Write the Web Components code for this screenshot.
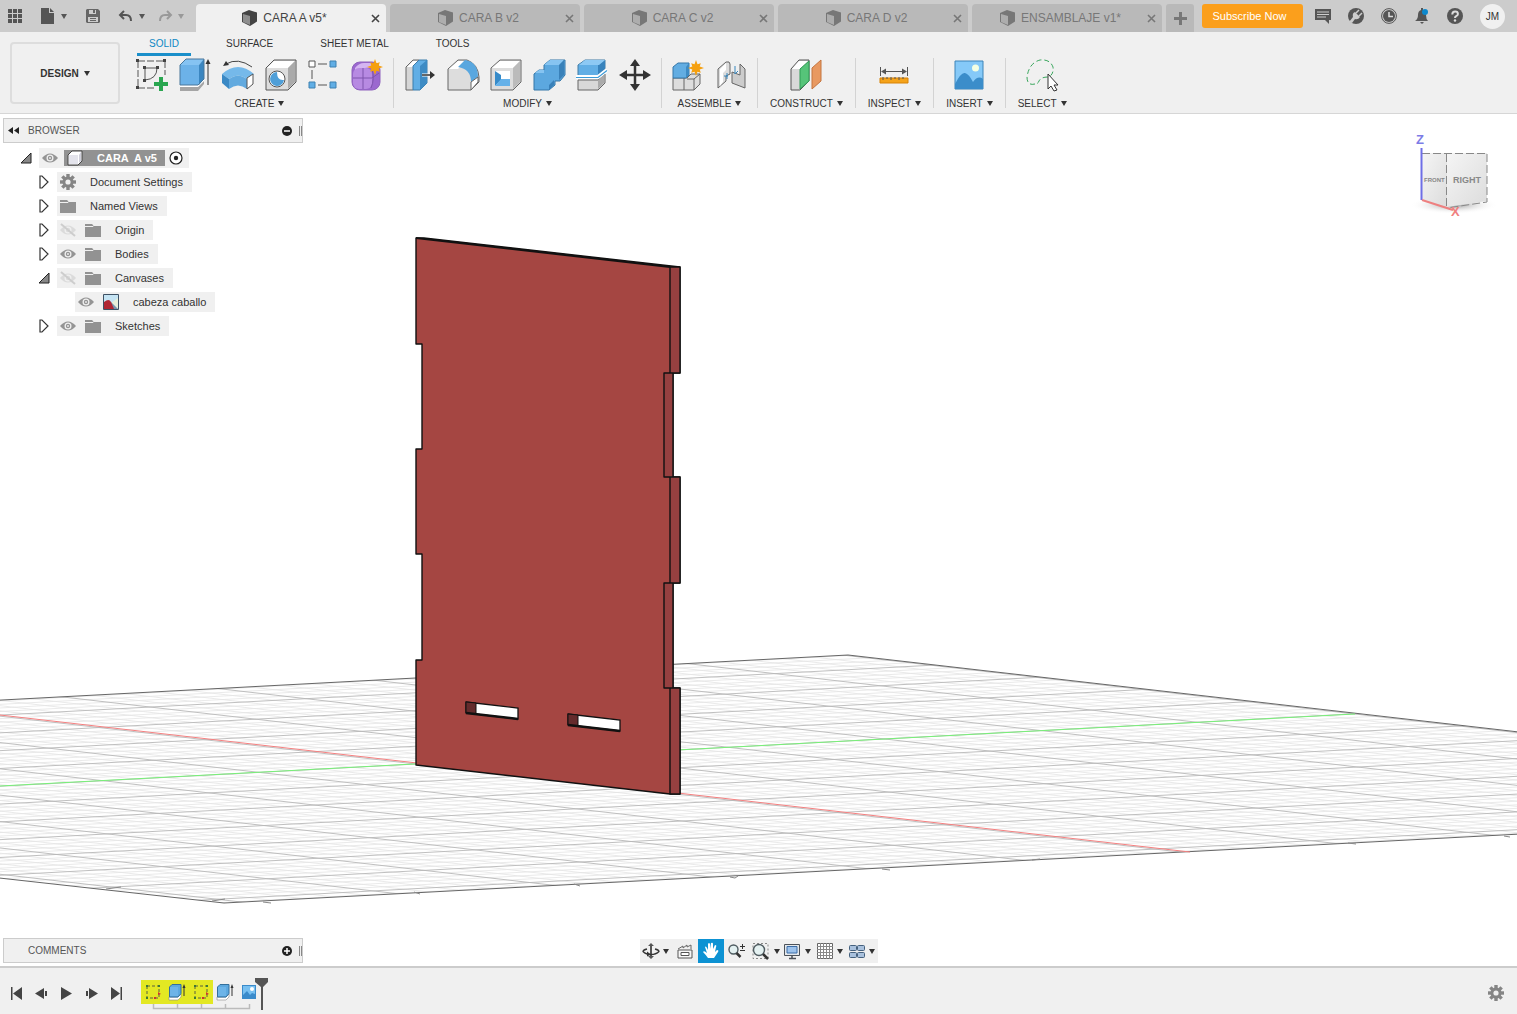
<!DOCTYPE html>
<html lang="en">
<head>
<meta charset="utf-8">
<title>CARA A v5*</title>
<style>
  body {
    margin: 0;
    height: 100vh;
    display: flex;
    flex-direction: column;
    overflow: hidden;
    font-family: "Liberation Sans", Arial, sans-serif;
    font-size: 11px;
    color: #333;
    background: #fff;
  }
</style>
</head>
<body>
<cad-topbar>
  <cad-tab active>CARA A v5*</cad-tab>
  <cad-tab>CARA B v2</cad-tab>
  <cad-tab>CARA C v2</cad-tab>
  <cad-tab>CARA D v2</cad-tab>
  <cad-tab>ENSAMBLAJE v1*</cad-tab>
</cad-topbar>
<cad-ribbon>
  <ribbon-group label="CREATE" icons="sketch extrude revolve hole pattern form"></ribbon-group>
  <ribbon-group label="MODIFY" icons="press fillet shell combine split move"></ribbon-group>
  <ribbon-group label="ASSEMBLE" icons="component joint"></ribbon-group>
  <ribbon-group label="CONSTRUCT" icons="plane"></ribbon-group>
  <ribbon-group label="INSPECT" icons="measure"></ribbon-group>
  <ribbon-group label="INSERT" icons="picture"></ribbon-group>
  <ribbon-group label="SELECT" icons="select"></ribbon-group>
</cad-ribbon>
<cad-viewport>
  <cad-scene slot="scene"></cad-scene>
  <cad-panel slot="browser" label="BROWSER" collapse sign="minus">
    <tree-row level="0" open eye="on" icon="cube" root>CARA  A v5</tree-row>
    <tree-row level="1" icon="gear">Document Settings</tree-row>
    <tree-row level="1" icon="folder">Named Views</tree-row>
    <tree-row level="1" eye="off" icon="folder">Origin</tree-row>
    <tree-row level="1" eye="on" icon="folder">Bodies</tree-row>
    <tree-row level="1" open eye="off" icon="folder">Canvases</tree-row>
    <tree-row level="2" leaf eye="on" icon="canvas">cabeza caballo</tree-row>
    <tree-row level="1" eye="on" icon="folder">Sketches</tree-row>
  </cad-panel>
  <view-cube slot="cube"></view-cube>
  <cad-panel slot="comments" label="COMMENTS" sign="plus"></cad-panel>
  <nav-bar slot="nav"></nav-bar>
</cad-viewport>
<cad-timeline></cad-timeline>

<script>
/* Icons: [width, height, svg content] */
const star = (x, y, r) => {
  let p = "";
  for (let i = 0; i < 16; i++) {
    const a = (i * Math.PI) / 8;
    const d = i % 2 ? r * 0.5 : i % 4 === 0 ? r : r * 0.85;
    p += `${(x + Math.sin(a) * d).toFixed(1)},${(y - Math.cos(a) * d).toFixed(1)} `;
  }
  return `<polygon points="${p}" fill="#f5a00f"/>`;
};
const tabCube = `<path d="M1 3 8 0l8 2.500v9L9 16 1 12z" fill="currentColor"/><path d="M2 4l7 2v9l-7-3z" fill="#fff" fill-opacity=".4"/>`;
const eyeShape = `<path d="M0 6Q8-3 16 6Q8 15 0 6z" fill="#949494"/><circle cx="8" cy="6" r="3.500" fill="#f0f0f0"/><circle cx="8" cy="6" r="2.200" fill="#949494"/><circle cx="8" cy="6" r=".9" fill="#f0f0f0"/>`;
const cog = `<g fill="#858585"><circle cx="8" cy="8" r="5.500"/>${[0, 45, 90, 135].map((a) => `<path d="M6.300 0h3.400v16H6.300z" transform="rotate(${a} 8 8)"/>`).join("")}</g><circle cx="8" cy="8" r="2.600" fill="#f0f0f0"/>`;

const ICONS = {
  apps: [14, 14, [0, 5, 10].map((y) => [0, 5, 10].map((x) => `<path d="M${x} ${y}h4v4h-4z" fill="#555"/>`).join("")).join("")],
  file: [14, 16, `<path d="M0 0h8v5h5v11H0zM9 0l4 4H9z" fill="#555"/>`],
  save: [14, 14, `<path d="M0 1 1 0h11l2 2v11l-1 1H1l-1-1z" fill="#666"/><path d="M3 1h7v4H3zM2 8h10v5H2z" fill="#ccc"/><path d="M7 1h2v3H7zM4 9h6v1H4zM4 11h6v1H4z" fill="#666"/>`],
  undo: [14, 12, `<path d="M5 1 1 5l4 4M1 5h6q5 0 5 6" fill="none" stroke="#555" stroke-width="2"/>`],
  redo: [14, 12, `<path d="M9 1l4 4-4 4M13 5H7q-5 0-5 6" fill="none" stroke="#999" stroke-width="2"/>`],
  tabcube: [17, 16, tabCube],
  close: [9, 9, `<path d="M1 1l7 7M8 1 1 8" stroke="currentColor" stroke-width="1.600"/>`],
  plus: [13, 13, `<path d="M6.500 0v13M0 6.500h13" stroke="#777" stroke-width="3"/>`],
  chat: [16, 16, `<path d="M0 1h16v11h-2v4l-4-4H0z" fill="#555"/><path d="M2 4h12M2 6.500h12M2 9h9" stroke="#ccc"/>`],
  extension: [16, 16, `<circle cx="8" cy="8" r="8" fill="#555"/><path d="M1 14l4-5q-1-4 2-5l5 5q-2 3-5 2l-3 4z" fill="#ccc"/><path d="M8 5l3-3M11 8l3-3" stroke="#ccc" stroke-width="1.500"/>`],
  clock: [16, 16, `<circle cx="8" cy="8" r="7.400" fill="none" stroke="#555"/><circle cx="8" cy="8" r="6" fill="#555"/><path d="M8 4v4.500h4" fill="none" stroke="#ddd" stroke-width="1.500"/>`],
  bell: [16, 16, `<path d="M1 13q3-2 3-6 0-4 3-5V0h2v2q3 1 3 5 0 4 2 6zM6 14h4l-2 2z" fill="#555"/><circle cx="11" cy="4" r="3" fill="#0d88cc"/>`],
  help: [16, 16, `<circle cx="8" cy="8" r="8" fill="#555"/><path d="M5.300 6.500q0-3 2.800-3t2.800 2.400q0 1.500-1.700 2.300Q8 8.800 8 10" fill="none" stroke="#ddd" stroke-width="2"/><circle cx="8" cy="12.500" r="1.200" fill="#ddd"/>`],

  sketch: [32, 32, `<path d="M2 2h27v14M2 2v27h17" fill="none" stroke="#555" stroke-dasharray="7 2"/><path d="M9 9h12M9 9v12M21 9q0 11-12 12" fill="none" stroke="#555"/><path d="M0 0h3v3H0zM27 0h3v3h-3zM0 27h3v3H0zM7 7h3v3H7zM20 7h3v3h-3zM7 20h3v3H7z" fill="#444"/><path d="M23 18h4v5h5v4h-5v5h-4v-5h-5v-4h5z" fill="#2aa650"/>`],
  extrude: [32, 32, `<path d="M1 27h18l6-6v4l-6 7H1z" fill="#a5a5a5"/><path d="M1 26h18l6-6v2l-6 6H1z" fill="#fff"/><path d="M1 6 7 0h18l-5 6v20H1z" fill="#6cb2e8"/><path d="M1 6 7 0h18l-5 6z" fill="#85c3f2"/><path d="M20 6l5-6v20l-5 6z" fill="#3b86c0"/><path d="M1 6 7 0h18v20l-6 6H1z" fill="none" stroke="#48779b"/><path d="M29 26V3" stroke="#333"/><path d="M29 0l2.500 5h-5z" fill="#333"/>`],
  revolve: [32, 32, `<path d="M0 15Q16 1 32 15l-7 5q-9-7-18 0z" fill="#75b9ea"/><path d="M0 15l7 5v10l-7-6z" fill="#3a89c5"/><path d="M7 20q9-7 18 0v10q-9-7-18 0z" fill="#62aadf"/><path d="M25 19l6-4v10l-6 5z" fill="#fff" stroke="#555"/><path d="M4 5q12-7 26 3" fill="none" stroke="#444"/><path d="M1 7l3-5 3 4z" fill="#333"/>`],
  hole: [32, 32, `<path d="M1 9 9 1h22v22l-8 8H1z" fill="#ddd" stroke="#555"/><path d="M2 9l7-7h21l-7 7z" fill="#fff"/><path d="M23 9l7-7v21l-7 7z" fill="#aaa"/><circle cx="12" cy="20" r="8" fill="#fff" stroke="#555"/><path d="M12 13a7 7 0 1 0 7 8q-7 1-7-8z" fill="#4f9fd8"/>`],
  pattern: [32, 32, `<path d="M10 5h9M4 11v9M10 26h9" fill="none" stroke="#555"/><path d="M1 2h6v6H1z" fill="#fff" stroke="#555"/><path d="M22 2h6v6h-6zM1 23h6v6H1zM22 23h6v6h-6z" fill="#61aee5" stroke="#3f81b1"/>`],
  form: [32, 32, `<rect x="1" y="3" width="28" height="28" rx="8" fill="#9b68cf" stroke="#8f62bd"/><path d="M4 9q4-5 9-5h9l-3 5q-8-1-15 3z" fill="#d5b5f2"/><rect x="2" y="9" width="19" height="21" rx="6" fill="#b78ae2"/><path d="M12 9v21M2 19h19l7-5M21 10q3 10-1 19" fill="none" stroke="#7f54ad"/>${star(24, 8, 8)}`],
  press: [32, 32, `<path d="M2 8l7-7h6v24l-6 6H2z" fill="#d6d6d6" stroke="#666"/><path d="M3 8l6-6h6L9 8z" fill="#fff"/><path d="M9 7l6-6h8v23l-7 7H9z" fill="#61aee5" stroke="#3b7cab"/><path d="M16 7l7-6v23l-7 7z" fill="#3d8bc4"/><path d="M18 16h10" stroke="#fff" stroke-width="3"/><path d="M18 16h9" stroke="#333" stroke-width="1.500"/><path d="M26 12l5 4-5 4z" fill="#333"/>`],
  fillet: [32, 32, `<path d="M1 10 11 1h9q11 4 12 17v5l-8 8H1z" fill="#ddd" stroke="#666"/><path d="M2 10 11 2h8l-8 8z" fill="#fff"/><path d="M11 8l7-7q13 2 13 17l-7 5q0-13-13-15z" fill="#59a7df"/><path d="M24 23l7-5v5l-7 8z" fill="#fff" stroke="#666"/>`],
  shell: [32, 32, `<path d="M1 9 10 1h21v22l-8 8H1z" fill="#ddd" stroke="#666"/><path d="M2 9l8-7h20l-7 7z" fill="#fff"/><path d="M23 9l7-7v21l-7 7z" fill="#bbb"/><path d="M5 12h15v15H5z" fill="#fff"/><path d="M5 12l6 4v5l-6 6z" fill="#378bc9"/><path d="M5 27l6-7h9v7z" fill="#65b1e9"/>`],
  combine: [32, 32, `<path d="M1 15l5-4h5V6l6-5h15v15l-5 6h-5v4l-6 5H1z" fill="#5ca8df" stroke="#3477a8"/><path d="M11 6l6-5h14l-5 5zM2 14l4-3h5v3z" fill="#86c4f1"/><path d="M26 6l5-5v15l-5 5zM16 26l5-5v5l-5 5z" fill="#3981b9"/>`],
  split: [32, 32, `<path d="M2 6l7-5h20v10l-7 7H2z" fill="#61aee5" stroke="#427da6"/><path d="M22 6l7-5v10l-7 6z" fill="#3883bd"/><path d="M3 6l6-5h20l-6 5z" fill="#8dc9f4"/><path d="M2 21h20l7-6v9l-7 7H2z" fill="#d8d8d8" stroke="#666"/><path d="M22 21l6-5v8l-6 6z" fill="#aaa"/><path d="M0 18h22l9-7" fill="none" stroke="#fff" stroke-width="4"/><path d="M0 18.500h22l9-7" fill="none" stroke="#3c9bd7" stroke-width="1.200"/>`],
  move: [32, 32, `<path d="M16 4v24M4 16h24" stroke="#333" stroke-width="2.500"/><path d="M16 0l5 7H11zM16 32l5-7H11zM0 16l8-5v10zM32 16l-8-5v10z" fill="#333"/>`],
  component: [32, 32, `<path d="M1 19h14l4-4h9v10l-6 6H1z" fill="#ddd" stroke="#666"/><path d="M12 19v12M15 20h7l6-5M22 20v11" fill="none" stroke="#666"/><path d="M1 8l5-4h11v12l-3 3H1z" fill="#62ade2" stroke="#3678a9"/><path d="M14 8l3-4v12l-3 3z" fill="#3d8bc4"/>${star(24, 9, 8)}`],
  joint: [32, 32, `<path d="M3 10l8-7q4-1 4 2v10l-4 2v5l-8 7z" fill="#ddd" stroke="#666"/><path d="M30 29V10l-5-5v11l-8-3v11z" fill="#ccc" stroke="#666"/><path d="M5 10l6-6v7l-3 3v9l-3 4z" fill="#fff"/><path d="M12 14v6M9 17h4M20 7v8l3-3" fill="none" stroke="#3686bd"/>`],
  plane: [32, 32, `<path d="M1 10 9 1h10v21l-9 9H1z" fill="#d9d9d9" stroke="#555"/><path d="M2 10 9 2h9l-8 8z" fill="#fff"/><path d="M10 10l9-8v20l-9 8z" fill="#56c479" stroke="#2f9b55"/><path d="M22 9l9-8v21l-9 8z" fill="#e89961" stroke="#c4743f"/>`],
  measure: [32, 32, `<path d="M2.500 8v9M29.500 8v9M4 12.500h24" stroke="#555"/><path d="M3 12.500l5-3v6zM29 12.500l-5-3v6z" fill="#555"/><path d="M2 19h28v5H2z" fill="#f5a31a" stroke="#d78206"/><path d="M5 18v3M9 18v2M13 18v3M17 18v2M21 18v3M25 18v2" stroke="#555"/>`],
  picture: [32, 32, `<path d="M2 2h28v28H2z" fill="#85c9f8" stroke="#3c84b8"/><circle cx="22.500" cy="9" r="3.500" fill="#f4ffe3"/><path d="M2 25q6-12 10-11 4 1 8 9 5-7 10-3v10H2z" fill="#3b8dca"/>`],
  select: [32, 32, `<path d="M9 25Q1 27 1 18 3 4 14 1q10-1 13 7 1 8-5 10-7 0-9 4-1 3-4 3" fill="none" stroke="#37a65b" stroke-dasharray="5 3"/><path d="M22 15v15l3-3 3 5 3-1-3-5h4z" fill="#fff" stroke="#333"/>`],

  minus: [10, 10, `<circle cx="5" cy="5" r="5" fill="#222"/><path d="M2 5h6" stroke="#fff" stroke-width="1.500"/>`],
  add: [10, 10, `<circle cx="5" cy="5" r="5" fill="#222"/><path d="M2 5h6M5 2v6" stroke="#fff" stroke-width="1.500"/>`],
  collapse: [11, 7, `<path d="M5 0v7L0 3.500zM11 0v7L6 3.500z" fill="#222"/>`],
  open: [12, 12, `<path d="M11 1v10H1z" fill="#888" stroke="#222"/>`],
  closed: [10, 14, `<path d="M1 1h2l6 6-6 6H1z" fill="#fff" stroke="#333" stroke-width="1.200"/>`],
  eyeon: [16, 12, eyeShape],
  eyeoff: [16, 12, `<g opacity=".22">${eyeShape}<path d="M1 0l14 12" stroke="#555" stroke-width="2"/></g>`],
  cube: [16, 16, `<path d="M1 5l4-4h10v10l-4 4H1z" fill="#fff" stroke="#444"/><path d="M2 5h9v9H2z" fill="#e4e4ec"/><path d="M12 5l2-3v9l-2 2z" fill="#cfcfda"/>`],
  gear: [16, 16, cog],
  folder: [16, 14, `<path d="M0 1h7l2 2h7v11H0z" fill="#929292"/><path d="M0 3.500h8l2-2" fill="none" stroke="#f0f0f0"/>`],
  canvas: [16, 16, `<path d="M1 1h14v14H1z" fill="#c5e4f4"/><path d="M8 9l7-5v11z" fill="#e8efda"/><path d="M8 8l7 7H8z" fill="#7993ac"/><path d="M1 8q5-4 7 0l3 7H1z" fill="#b12633"/><path d="M.5.500h15v15H.5z" fill="none" stroke="#3e5265"/>`],
  target: [14, 14, `<circle cx="7" cy="7" r="6" fill="#fff" stroke="#222" stroke-width="1.200"/><circle cx="7" cy="7" r="2.200" fill="#222"/>`],

  orbit: [16, 16, `<path d="M8 2v12" stroke="#555" stroke-width="2"/><path d="M8 0l3 3H5zM8 16l3-3H5z" fill="#555"/><path d="M4 6Q0 7 0 8.500q3 3 8 3t8-3Q16 7 12 6" fill="none" stroke="#333" stroke-width="1.300"/><path d="M4 8.500v5l4-2z" fill="#333"/>`],
  look: [16, 16, `<path d="M1 7h14v8H1z" fill="#f6f6f6" stroke="#555"/><path d="M4 9.500h8v3H4z" fill="#fff" stroke="#555"/><path d="M1 6l5-3v2l4-3v2l4-2v4" fill="none" stroke="#666"/>`],
  hand: [16, 16, `<path d="M5 15Q3 12 0 9q1-2 4 1L2 4q1-2 3 3V1q1-2 2 0v5l1-6q2-1 2 1v5l2-4q2 0 1 2l-1 5 2-2q2 0 1 2l-4 6z" fill="#fff"/>`],
  zoom: [17, 16, `<circle cx="5.500" cy="6.500" r="4.500" fill="#e4f1f1" stroke="#4f5b60" stroke-width="1.400"/><path d="M8.500 10l4 4" stroke="#333" stroke-width="2.500"/><path d="M12 3.500h5M14.500 1v5M12 7.500h5" stroke="#333"/>`],
  fit: [18, 16, `<path d="M1 .500h15v15H1z" fill="none" stroke="#888" stroke-dasharray="2 2"/><circle cx="7" cy="7" r="5.500" fill="#e4f1f1" stroke="#4f5b60" stroke-width="1.400"/><path d="M11 11l5 5" stroke="#333" stroke-width="2.500"/>`],
  monitor: [17, 15, `<path d="M.5.500h15v11H.5z" fill="#e4e8ec" stroke="#4c5259"/><path d="M3 2.500h10v6.500H3z" fill="#9cc2ec" stroke="#3b6ca7"/><path d="M5 14.500h7M8 12v2" fill="none" stroke="#4c5259" stroke-width="1.500"/>`],
  grid: [16, 16, `<path d="M.5.500h15v15H.5z" fill="#fff" stroke="#666"/><path d="M3.500 0v16M6.500 0v16M9.500 0v16M12.500 0v16M0 3.500h16M0 6.500h16M0 9.500h16M0 12.500h16" stroke="#888"/>`],
  views: [16, 13, `<g fill="#a9c1dd" stroke="#45617e"><rect x=".5" y=".5" width="7" height="5" rx="1"/><rect x="8.500" y=".5" width="7" height="5" rx="1"/><rect x=".5" y="7.500" width="7" height="5" rx="1"/><rect x="8.500" y="7.500" width="7" height="5" rx="1"/></g>`],

  first: [13, 13, `<path d="M1 0h1.500v13H1zM12 0v13L3 6.500z" fill="#444"/>`],
  prev: [13, 13, `<path d="M9 1v11L0 6.500zM10 4h2v5h-2z" fill="#444"/>`],
  play: [13, 13, `<path d="M1 0v13l11-6.500z" fill="#444"/>`],
  next: [13, 13, `<path d="M4 1v11l9-5.500zM1 4h2v5H1z" fill="#444"/>`],
  last: [13, 13, `<path d="M1 0v13l9-6.500zM10.500 0H12v13h-1.500z" fill="#444"/>`],
  tlsketch: [16, 16, `<path d="M2 2h12v12H2z" fill="none" stroke="#5c6040" stroke-dasharray="3 2"/><path d="M1 1h2v2H1zM13 1h2v2h-2zM1 13h2v2H1z" fill="#3d7a35"/><path d="M13 8l3 2-3 1zM9 13h2v2H9z" fill="#c33"/>`],
  tlextrude: [16, 16, `<path d="M0 13h9l3-3v3l-3 3H0z" fill="#fff" stroke="#888" stroke-width=".6"/><path d="M.5 3 3 .5h9v9L9 13H.500z" fill="#5ca8df" stroke="#336f9c"/><path d="M1 3h8v9H1z" fill="#6db4e8"/><path d="M15 12V3" stroke="#333"/><path d="M15 0l1.500 4h-3z" fill="#333"/>`],
  tlpicture: [14, 14, `<path d="M0 0h14v14H0z" fill="#3a8bcb"/><path d="M1 1h12v8l-3-1-2 2-3-4-4 4z" fill="#78c0f1"/><circle cx="10" cy="4" r="2" fill="#fff"/>`],
  tlgear: [16, 16, cog],
  caret: [6, 5, `<path d="M0 0h6L3 5z" fill="currentColor"/>`],
};

class CadIcon extends HTMLElement {
  constructor() {
    super();
    this.attachShadow({ mode: "open" });
  }
  connectedCallback() {
    const [w, h, body] = ICONS[this.getAttribute("name")];
    this.shadowRoot.innerHTML = `
      <style>
        :host { display: inline-flex; flex: none; }
        svg { display: block; overflow: visible; }
      </style>
      <svg width="${w}" height="${h}" viewBox="0 0 ${w} ${h}" aria-hidden="true">${body}</svg>`;
  }
}

const icon = (name) => `<cad-icon name="${name}"></cad-icon>`;

const buttonReset = `
  button { font: inherit; color: inherit; background: none; border: 0; padding: 0; margin: 0;
    display: flex; align-items: center; justify-content: center; cursor: pointer; }`;

class CadTopbar extends HTMLElement {
  constructor() {
    super();
    this.attachShadow({ mode: "open" }).innerHTML = `
      <style>
        ${buttonReset}
        :host { display: flex; height: 32px; flex: none; background: #ccc; }
        .quick { display: flex; align-items: center; width: 196px; flex: none; box-sizing: border-box; padding-left: 8px; color: #555; }
        .quick button { gap: 6px; }
        .file { margin-left: 19px; }
        .save { margin-left: 19px; }
        .undo { margin-left: 19px; }
        .redo { margin-left: 13px; color: #999; }
        .tabs { display: flex; flex: 1; min-width: 0; gap: 4px; padding-top: 4px; }
        .new { width: 28px; background: #b9b9b9; border-radius: 3px 3px 0 0; }
        .account { display: flex; align-items: center; flex: none; gap: 17px; padding: 0 12px 0 8px; }
        .subscribe { width: 101px; height: 24px; background: #fb9f1c; color: #fff; border-radius: 3px; margin-right: -5px; padding-right: 6px; }
        .user { width: 25px; height: 25px; border-radius: 50%; background: #f0f0f0; font-size: 10px; }
      </style>
      <div class="quick">
        <button aria-label="Data panel">${icon("apps")}</button>
        <button class="file" aria-label="File">${icon("file")}${icon("caret")}</button>
        <button class="save" aria-label="Save">${icon("save")}</button>
        <button class="undo" aria-label="Undo">${icon("undo")}${icon("caret")}</button>
        <button class="redo" aria-label="Redo">${icon("redo")}${icon("caret")}</button>
      </div>
      <div class="tabs"><slot></slot><button class="new" aria-label="New design">${icon("plus")}</button></div>
      <div class="account">
        <button class="subscribe">Subscribe Now</button>
        <button aria-label="Comments">${icon("chat")}</button>
        <button aria-label="Extensions">${icon("extension")}</button>
        <button aria-label="Job status">${icon("clock")}</button>
        <button aria-label="Notifications">${icon("bell")}</button>
        <button aria-label="Help">${icon("help")}</button>
        <button class="user">JM</button>
      </div>`;
  }
}

class CadTab extends HTMLElement {
  constructor() {
    super();
    this.attachShadow({ mode: "open" }).innerHTML = `
      <style>
        ${buttonReset}
        :host { display: flex; flex: 1; max-width: 190px; background: #b9b9b9; color: #777; border-radius: 4px 4px 0 0; font-size: 12px; }
        :host([active]) { background: #f0f0f0; color: #444; }
        .name { flex: 1; gap: 5px; padding-left: 8px; white-space: nowrap; }
        .close { width: 22px; }
      </style>
      <button class="name">${icon("tabcube")}<slot></slot></button>
      <button class="close" aria-label="Close">${icon("close")}</button>`;
  }
}

class CadRibbon extends HTMLElement {
  constructor() {
    super();
    this.attachShadow({ mode: "open" }).innerHTML = `
      <style>
        ${buttonReset}
        :host { display: flex; flex: none; height: 81px; background: #f0f0f0; border-bottom: 1px solid #d6d6d6; font-size: 10px; }
        .workspace { width: 110px; height: 62px; margin: 10px 6px 0 10px; border: 2px solid #ddd; border-radius: 4px; font-weight: bold; gap: 5px; }
        .right { flex: 1; }
        nav { display: flex; gap: 23px; padding-left: 11px; height: 24px; }
        nav a { display: flex; align-items: center; box-sizing: border-box; padding: 1px 12px 0; color: #333; text-decoration: none; border-bottom: 3px solid transparent; }
        nav a.on { color: #0d88c4; border-color: #1a8fca; }
        .groups { display: flex; }
      </style>
      <button class="workspace">DESIGN ${icon("caret")}</button>
      <div class="right">
        <nav><a href="#solid" class="on">SOLID</a><a href="#surface">SURFACE</a><a href="#sheet">SHEET METAL</a><a href="#tools">TOOLS</a></nav>
        <div class="groups"><slot></slot></div>
      </div>`;
  }
}

class RibbonGroup extends HTMLElement {
  constructor() {
    super();
    this.attachShadow({ mode: "open" });
  }
  connectedCallback() {
    const names = this.getAttribute("icons").split(" ");
    const pad = names.length > 1 ? 10 : 12;
    this.shadowRoot.innerHTML = `
      <style>
        ${buttonReset}
        :host { display: flex; flex-direction: column; align-items: center; height: 50px; margin-top: 2px; padding: 0 ${pad}px; border-right: 1px solid #d3d3d3; }
        :host(:last-of-type) { border: 0; }
        .icons { display: flex; gap: 11px; padding-top: 1px; }
        .label { gap: 4px; height: 12px; margin-top: 7px; white-space: nowrap; }
      </style>
      <div class="icons">${names.map((n) => `<button aria-label="${n}">${icon(n)}</button>`).join("")}</div>
      <button class="label">${this.getAttribute("label")}${icon("caret")}</button>`;
  }
}

class CadViewport extends HTMLElement {
  constructor() {
    super();
    this.attachShadow({ mode: "open" }).innerHTML = `
      <style>
        :host { display: grid; grid-template: 1fr auto / 1fr auto 1fr; flex: 1; min-height: 0; background: #fff; }
        ::slotted([slot=scene]) { grid-area: 1 / 1 / 3 / 4; min-height: 0; min-width: 0; }
        ::slotted([slot=browser]) { grid-area: 1 / 1; place-self: start; margin: 4px 0 0 3px; z-index: 1; }
        ::slotted([slot=cube]) { grid-area: 1 / 3; place-self: start end; margin: 16px 17px 0 0; z-index: 1; }
        ::slotted([slot=comments]) { grid-area: 2 / 1; place-self: end start; margin: 0 0 3px 3px; z-index: 1; }
        ::slotted([slot=nav]) { grid-area: 2 / 2; place-self: end center; margin-bottom: 3px; z-index: 1; }
      </style>
      <slot name="scene"></slot><slot name="browser"></slot><slot name="cube"></slot>
      <slot name="comments"></slot><slot name="nav"></slot>`;
  }
}

class CadScene extends HTMLElement {
  constructor() {
    super();
    this.attachShadow({ mode: "open" }).innerHTML = `
      <style>
        :host { display: block; overflow: hidden; }
        svg { display: block; width: 100%; height: 100%; }
      </style>
      <svg viewBox="0 114 1517 852" preserveAspectRatio="xMidYMid slice">
        <defs><clipPath id="ground"><path d="M848 655-900 748v30L224 903l1748-93v-26z"/></clipPath></defs>
        <g clip-path="url(#ground)">${this.gridLines()}</g>
        <path d="M-900 748 848 655l1124 129" fill="none" stroke="#666"/>
        <path d="M-900 778 224 903l1748-93" fill="none" stroke="#666"/>
        <path d="M0 715 1190 852" stroke="#f58080"/>
        <path d="M0 786 1355 714" stroke="#78f078"/>
        <path d="M263 902l8 1M414 892l6 2M574 884l6 2M730 877l5 1 3-2M882 869l8 1M1032 860l8-1M1348 843l8 1M1504 836l6 1M106 889l15-2M212 901l13-2" stroke="#888" fill="none"/>
        ${this.plate()}
      </svg>`;
  }

  /* Parallel projection: both families of lines keep one slope */
  gridLines() {
    let minor = "";
    let major = "";
    for (let k = -60; k <= 60; k++) {
      const r = 764 + k * 5.27;
      const g = 764 + k * 3.56;
      const red = `M-10 ${(r - 49).toFixed(1)}L1990 ${(r + 181.200).toFixed(1)}`;
      const green = `M-10 ${(g + 22.800).toFixed(1)}L1990 ${(g - 84.200).toFixed(1)}`;
      if (k % 5) minor += red + green;
      else major += red + green;
    }
    return `<path d="${minor}" stroke="#e4e4e4" stroke-width=".8"/><path d="${major}" stroke="#b8b8b8" stroke-width=".9"/>`;
  }

  plate() {
    const slot = (x, y) => `
      <path d="M${x} ${y}l52 6v11l-52-6z" fill="#fff" stroke="#111" stroke-width="1.300"/>
      <path d="M${x} ${y}l10 1v11l-10-1z" fill="#642b2c" stroke="#111"/>
      <path d="M${x} ${y + 11}l52 6" stroke="#111" stroke-width="2.500"/>`;
    return `
      <g stroke="#111" stroke-width="1.400" stroke-linejoin="round">
        <path d="M416 238l8 0 256 29v106h-7v104h7v106h-7v105h7v106h-10L416 765V660h6V554h-6V449h6V344h-6z" fill="#a54642"/>
        <path d="M670 267h10v106h-10zM664 373h9v104h-9zM670 477h10v106h-10zM664 583h9v105h-9zM670 688h10v106h-10z" fill="#964040"/>
        <path d="M416 238l254 29" stroke-width="2"/>
      </g>${slot(466, 702)}${slot(568, 714)}`;
  }
}

class CadPanel extends HTMLElement {
  constructor() {
    super();
    this.attachShadow({ mode: "open" });
  }
  connectedCallback() {
    const sign = this.getAttribute("sign") === "minus" ? "minus" : "add";
    this.shadowRoot.innerHTML = `
      <style>
        ${buttonReset}
        :host { display: block; width: 300px; }
        header { display: flex; align-items: center; height: 25px; box-sizing: border-box; background: #f0f0f0; border: 1px solid #ccc; font-size: 10px; color: #555; }
        .fold { width: 18px; height: 100%; }
        .title { flex: 1; padding-left: 6px; }
        .grip { width: 1px; height: 10px; border: solid #888; border-width: 0 1px; margin: 0 0 0 7px; }
        .rows { display: flex; flex-direction: column; gap: 4px; padding-top: 5px; }
      </style>
      <header>
        <button class="fold" aria-label="Collapse">${this.hasAttribute("collapse") ? icon("collapse") : ""}</button>
        <span class="title">${this.getAttribute("label")}</span>
        <button aria-label="Toggle">${icon(sign)}</button><span class="grip"></span>
      </header>
      ${this.children.length ? `<div class="rows"><slot></slot></div>` : ""}`;
  }
}

class TreeRow extends HTMLElement {
  constructor() {
    super();
    this.attachShadow({ mode: "open" });
  }
  connectedCallback() {
    const eye = this.getAttribute("eye");
    const arrow = this.hasAttribute("leaf") ? "" : icon(this.hasAttribute("open") ? "open" : "closed");
    this.shadowRoot.innerHTML = `
      <style>
        ${buttonReset}
        :host { display: flex; height: 20px; padding-left: ${Number(this.getAttribute("level")) * 18 + 14}px; }
        .arrow { width: 22px; flex: none; padding-right: 5px; box-sizing: border-box; }
        .row { display: flex; align-items: center; background: #f0f0f0; padding: 0 9px 0 3px; }
        .eye { width: 16px; margin-right: 9px; }
        .name { gap: 14px; white-space: pre; }
        :host([root]) .name { background: #929292; color: #fff; font-weight: bold; height: 16px; padding: 0 8px 0 3px; margin: 0 4px 0 -3px; }
        :host([root]) .row { padding-right: 6px; }
      </style>
      <button class="arrow" aria-label="Expand">${arrow}</button>
      <div class="row">
        ${eye ? `<button class="eye" aria-label="Visibility">${icon("eye" + eye)}</button>` : ""}
        <button class="name">${icon(this.getAttribute("icon"))}<slot></slot></button>
        ${this.hasAttribute("root") ? `<button aria-label="Activate">${icon("target")}</button>` : ""}
      </div>`;
  }
}

class ViewCube extends HTMLElement {
  constructor() {
    super();
    this.attachShadow({ mode: "open" }).innerHTML = `
      <style>
        :host { display: block; }
        svg { display: block; font-weight: bold; fill: #888; }
      </style>
      <svg width="90" height="90" viewBox="1410 130 90 90">
        <defs>
          <linearGradient id="face" x2="1" y2="1"><stop stop-color="#f5f5f5"/><stop offset="1" stop-color="#dcdcdc"/></linearGradient>
          <radialGradient id="shade"><stop stop-color="#999"/><stop offset="1" stop-color="#fff" stop-opacity="0"/></radialGradient>
        </defs>
        <ellipse cx="1454" cy="205" rx="44" ry="9" fill="url(#shade)"/>
        <path d="M1422 153h25v54l-25-7z" fill="url(#face)"/>
        <path d="M1447 153h40v48l-40 6z" fill="url(#face)"/>
        <path d="M1422 153.500h65M1446.500 154v53M1487 154v48l-40 6" fill="none" stroke="#888" stroke-dasharray="8 3"/>
        <path d="M1421.500 148v52" stroke="#6e6ee6" stroke-width="2"/>
        <path d="M1422 200l31 10" stroke="#ee8080" stroke-width="2"/>
        <text x="1416" y="144" font-size="13" fill="#7c7ce6">Z</text>
        <text x="1451" y="216" font-size="13" fill="#f08080">X</text>
        <text x="1424" y="182" font-size="6">FRONT</text>
        <text x="1453" y="183" font-size="9">RIGHT</text>
      </svg>`;
  }
}

class NavBar extends HTMLElement {
  constructor() {
    super();
    const items = ["orbit+", "look", "hand", "zoom", "fit+", "monitor+", "grid+", "views+"];
    this.attachShadow({ mode: "open" }).innerHTML = `
      <style>
        ${buttonReset}
        :host { display: flex; height: 24px; background: #f0f0f0; }
        button { width: 26px; }
        .menu { width: 32px; gap: 4px; }
        .on { background: #0d92d3; }
      </style>
      ${items.map((item) => {
        const name = item.replace("+", "");
        const cls = item === "hand" ? "on" : item !== name ? "menu" : "";
        return `<button class="${cls}" aria-label="${name}">${icon(name)}${item !== name ? icon("caret") : ""}</button>`;
      }).join("")}`;
  }
}

class CadTimeline extends HTMLElement {
  constructor() {
    super();
    this.attachShadow({ mode: "open" }).innerHTML = `
      <style>
        ${buttonReset}
        :host { display: flex; flex: none; height: 46px; background: #f0f0f0; border-top: 2px solid #ccc; }
        .play { display: flex; gap: 12px; padding-left: 10px; height: 50px; }
        .strip { position: relative; margin: 12px 0 0 18px; }
        .features { display: flex; }
        .features button { width: 24px; height: 24px; }
        .features .hot { background: #e3e823; }
        .links { display: block; }
        .marker { position: absolute; right: -7px; top: -2px; }
        .settings { margin: 4px 13px 0 auto; }
      </style>
      <div class="play">
        ${["first", "prev", "play", "next", "last"].map((n) => `<button aria-label="${n}">${icon(n)}</button>`).join("")}
      </div>
      <div class="strip">
        <div class="features">
          <button class="hot" aria-label="Sketch1">${icon("tlsketch")}</button>
          <button class="hot" aria-label="Extrude1">${icon("tlextrude")}</button>
          <button class="hot" aria-label="Sketch2">${icon("tlsketch")}</button>
          <button aria-label="Extrude2">${icon("tlextrude")}</button>
          <button aria-label="Canvas1">${icon("tlpicture")}</button>
        </div>
        <svg class="links" width="120" height="6"><path d="M12.500 0v4.500h96V0M36.500 0v4M60.500 0v4M84.500 0v4" fill="none" stroke="#bbb" stroke-width="1.500"/></svg>
        <svg class="marker" width="13" height="32"><path d="M0 0h13v4L8 9v23H6V9L0 4z" fill="#555"/></svg>
      </div>
      <button class="settings" aria-label="Settings">${icon("tlgear")}</button>`;
  }
}

customElements.define("cad-icon", CadIcon);
customElements.define("cad-topbar", CadTopbar);
customElements.define("cad-tab", CadTab);
customElements.define("cad-ribbon", CadRibbon);
customElements.define("ribbon-group", RibbonGroup);
customElements.define("cad-viewport", CadViewport);
customElements.define("cad-scene", CadScene);
customElements.define("cad-panel", CadPanel);
customElements.define("tree-row", TreeRow);
customElements.define("view-cube", ViewCube);
customElements.define("nav-bar", NavBar);
customElements.define("cad-timeline", CadTimeline);
</script>
</body>
</html>
